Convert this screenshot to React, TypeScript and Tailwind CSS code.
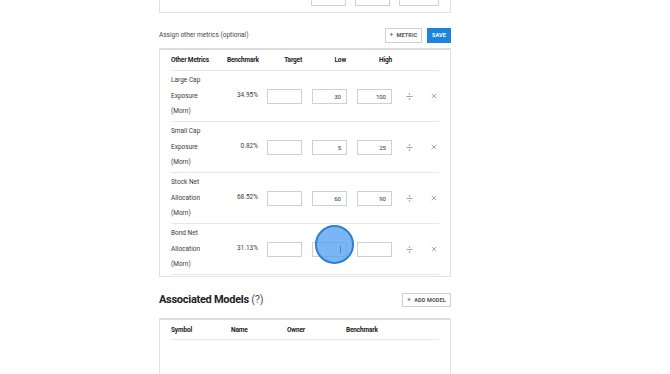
import React from "react";
import { X, ChevronDown } from "lucide-react";

const font = { fontFamily: "Roboto, 'Noto Sans', sans-serif" };

type Row = { name: string[]; bench: string; low: string; high: string };

const rows: Row[] = [
  { name: ["Large Cap", "Exposure", "(Morn)"], bench: "34.95%", low: "30", high: "100" },
  { name: ["Small Cap", "Exposure", "(Morn)"], bench: "0.82%", low: "5", high: "25" },
  { name: ["Stock Net", "Allocation", "(Morn)"], bench: "68.52%", low: "60", high: "90" },
  { name: ["Bond Net", "Allocation", "(Morn)"], bench: "31.13%", low: "", high: "" },
];

const cols = "grid grid-cols-[56px_31px_44px_45px_45px_34px_15px] items-center";

function Divide() {
  return (
    <svg width="7" height="7" viewBox="0 0 7 7" className="text-[#8a8a8a]">
      <circle cx="3.5" cy="1" r="0.8" fill="currentColor" />
      <line x1="0.5" y1="3.5" x2="6.5" y2="3.5" stroke="currentColor" strokeWidth="0.8" />
      <circle cx="3.5" cy="6" r="0.8" fill="currentColor" />
    </svg>
  );
}

function Box({ value, cursor }: { value?: string; cursor?: boolean }) {
  return (
    <div className="w-[35px] h-[15px] border border-[#d0d0d0] bg-white flex items-center justify-end pr-[5px] text-[6px] text-[#333] justify-self-end">
      {value}
      {cursor && <span className="w-px h-[7px] bg-[#333]" />}
    </div>
  );
}

export default function App() {
  return (
    <div className="relative w-[670px] h-[374px] overflow-hidden bg-white text-[#3a3a3a]" style={font}>
      <div className="pl-[159px] w-[451px]">
        {/* previous card, cut off at top */}
        <div className="-mt-[20px] h-[33px] border border-[#e2e2e2] bg-white px-[11px] pt-[10px]">
          <div className="flex items-center h-[15px] text-[6.5px]">
            <span className="w-[113px] -mt-[9px]">Other</span>
            <span className="w-[18px] -mt-[9px] text-right text-[#555]">0.00%</span>
            <div className="ml-[10px] w-[35px] h-[15px] border border-[#d0d0d0] flex items-center justify-end pr-[2px]">
              <ChevronDown size={6} strokeWidth={1.5} className="text-[#777]" />
            </div>
            <div className="ml-[9px] w-[36px] h-[15px] border border-[#d0d0d0]" />
            <div className="ml-[9px] w-[40px] h-[15px] border border-[#d0d0d0]" />
          </div>
        </div>

        {/* assign other metrics */}
        <div className="mt-[15px] flex items-center justify-between h-[15px]">
          <span className="text-[6.5px] text-[#444] pt-[1px]">Assign other metrics (optional)</span>
          <div className="flex gap-[5px]">
            <button className="h-[15px] w-[37px] border border-[#cfcfcf] bg-white text-[5.5px] font-bold tracking-wide text-[#555] flex items-center justify-center gap-[3px]">
              <span className="text-[7px] font-normal">+</span> METRIC
            </button>
            <button className="h-[15px] w-[24px] bg-[#1b84dd] text-white text-[5.5px] font-bold tracking-wide">
              SAVE
            </button>
          </div>
        </div>

        <div className="mt-[5px] h-[229px] border border-[#e2e2e2] border-t-2 border-t-[#dcdcdc] bg-white px-[11px]">
          <div className={`${cols} h-[21px] pt-[2px] border-b border-[#e8e8e8] text-[6.5px] font-bold text-[#222] tracking-tight`}>
            <span>Other Metrics</span>
            <span className="text-right">Benchmark</span>
            <span className="text-right">Target</span>
            <span className="text-right pr-[1px]">Low</span>
            <span className="text-right">High</span>
            <span />
            <span />
          </div>
          {rows.map((r, i) => (
            <div key={i} className={`${cols} h-[51px] border-b border-[#e8e8e8] text-[6.5px]`}>
              <div className="flex flex-col leading-[15.5px] pt-[1px]">
                {r.name.map((n) => (
                  <span key={n}>{n}</span>
                ))}
              </div>
              <span className="text-right">{r.bench}</span>
              <Box />
              <Box value={r.low} cursor={i === 3} />
              <Box value={r.high} />
              <div className="flex justify-center">
                <Divide />
              </div>
              <div className="flex justify-center">
                <X size={8} strokeWidth={1.6} className="text-[#555]" />
              </div>
            </div>
          ))}
        </div>

        {/* associated models */}
        <div className="mt-[16px] flex items-center justify-between h-[14px]">
          <h2 className="text-[11px] font-bold tracking-tight text-[#222]">
            Associated Models <span className="font-normal text-[#555]">(?)</span>
          </h2>
          <button className="h-[14px] w-[49px] border border-[#cfcfcf] bg-white text-[5.5px] font-bold tracking-wide text-[#555] flex items-center justify-center gap-[3px]">
            <span className="text-[7px] font-normal">+</span> ADD MODEL
          </button>
        </div>

        <div className="mt-[11px] h-[80px] border border-[#e2e2e2] border-t-2 border-t-[#dcdcdc] bg-white px-[11px]">
          <div className="grid grid-cols-[60px_56px_59px_1fr] items-center h-[20px] pt-[3px] border-b border-[#e8e8e8] text-[6.5px] font-bold text-[#222] tracking-tight">
            <span>Symbol</span>
            <span>Name</span>
            <span>Owner</span>
            <span>Benchmark</span>
          </div>
        </div>
      </div>

      {/* click indicator */}
      <div className="absolute left-[315px] top-[225px] w-[39px] h-[39px] rounded-full bg-[#4f9ef0]/75 border-2 border-[#2a7fd9]" />
    </div>
  );
}
